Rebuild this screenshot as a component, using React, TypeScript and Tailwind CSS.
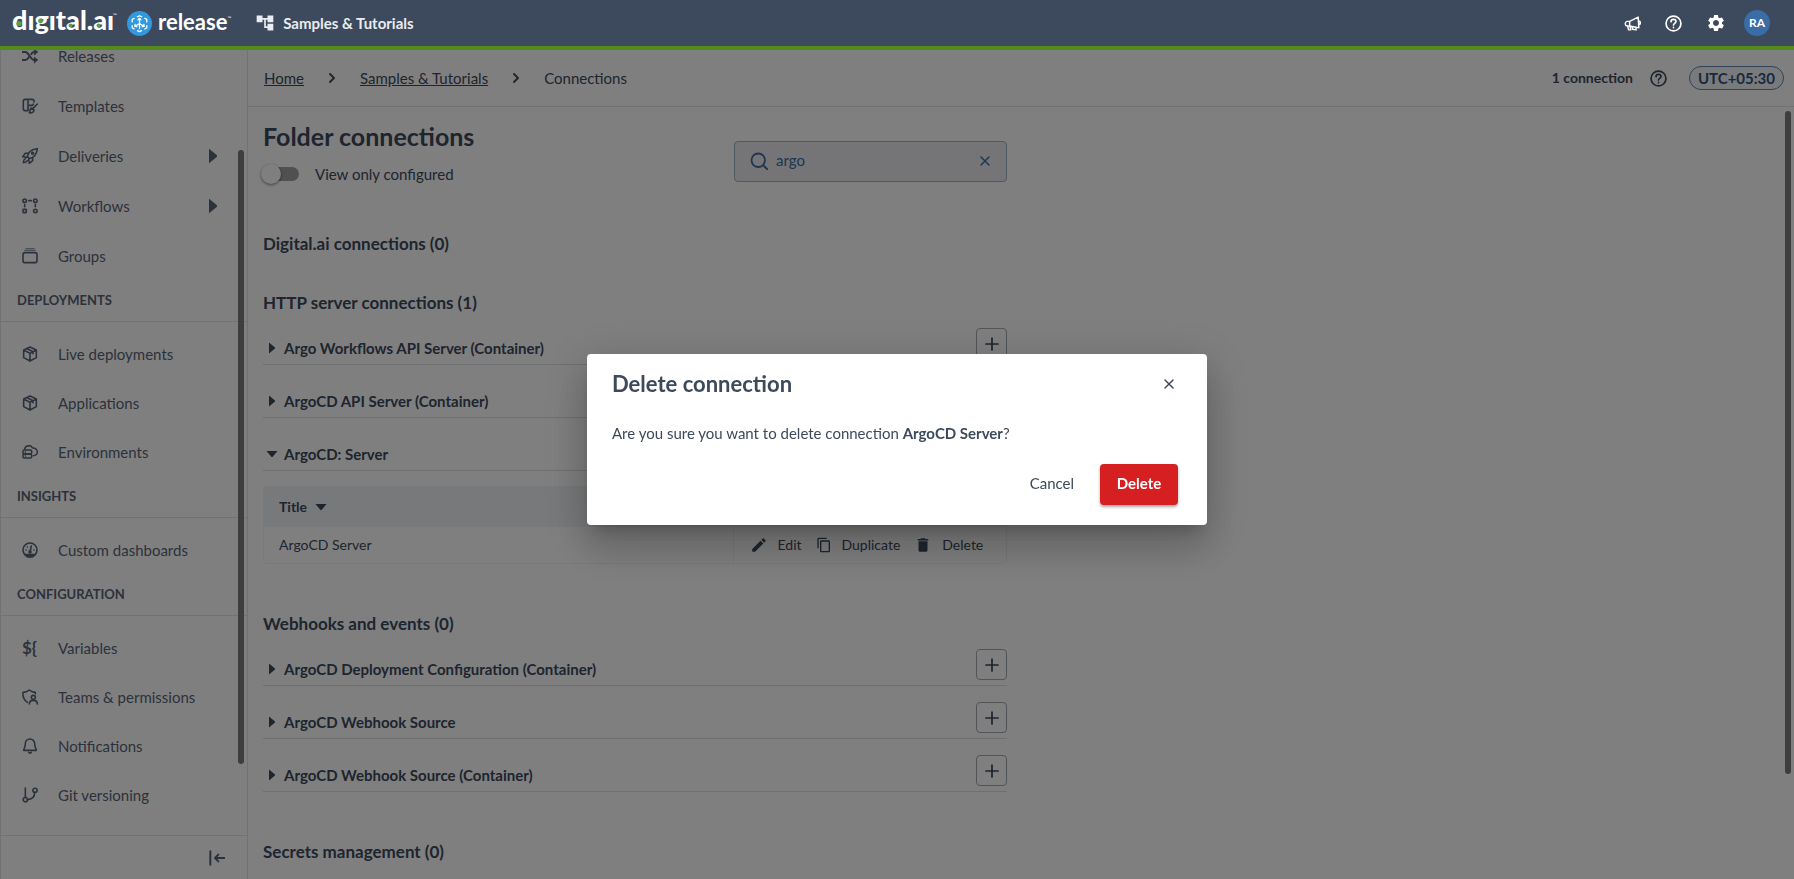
import { useState } from 'react';
import type { ReactNode } from 'react';
import { MdAccountTree, MdContentCopy, MdDelete, MdEdit, MdSettings } from 'react-icons/md';

type IconProps = { className?: string };

function StrokeIcon({ className = 'w-4 h-4', width = 2, children }: IconProps & { width?: number; children: ReactNode }) {
  return (
    <svg className={className} viewBox="0 0 24 24" fill="none" stroke="currentColor" strokeWidth={width} strokeLinecap="round" strokeLinejoin="round" aria-hidden="true">
      {children}
    </svg>
  );
}

const ShuffleIcon = () => (
  <StrokeIcon width={3}>
    <path d="M1 6h4c5 0 8 12 13 12h4M1 18h4c2 0 4-2 5-4M14 9c1-2 3-3 4-3h4" />
    <path d="m19 2 4 4-4 4zM19 14l4 4-4 4z" fill="currentColor" strokeWidth={1.5} />
  </StrokeIcon>
);

const TemplateIcon = () => (
  <StrokeIcon width={2.4}>
    <path d="M9 19H5a3 3 0 0 1-3-3V5a3 3 0 0 1 3-3h10a3 3 0 0 1 3 3v1M9 2v17M9 11h6a2 2 0 0 0 2-2" />
    <path d="m23 9-8 8M15 15c-2 0-3 2-3 4s-1 3-1 3c4 1 7-1 7-4z" />
  </StrokeIcon>
);

const RocketIcon = () => (
  <StrokeIcon width={2.3}>
    <path d="M8 13c1-6 6-11 15-12-1 9-6 14-12 15z" />
    <path d="M9 8H5l-4 5 6 1M16 15v4l-5 4-1-6M5 16c-2 1-3 3-3 6 3 0 5-1 6-3" />
    <circle cx="16" cy="8" r="1.5" />
  </StrokeIcon>
);

const WorkflowIcon = () => (
  <StrokeIcon width={2.4}>
    <circle cx="4" cy="4" r="2.6" />
    <circle cx="20" cy="4" r="2.6" />
    <rect x="1.5" y="17" width="5" height="5" rx="1" />
    <circle cx="20" cy="19.5" r="2.6" />
    <path d="M10 4h4M4 10v3M20 10v3" />
  </StrokeIcon>
);

const GroupIcon = () => (
  <StrokeIcon width={2.4}>
    <rect x="1.5" y="7" width="21" height="15" rx="3" />
    <path d="M4 3.5h16M6 .8h12" strokeWidth={2} opacity=".6" />
  </StrokeIcon>
);

const BoxIcon = () => (
  <StrokeIcon width={2.4}>
    <path d="m12 1.5 9.5 4.5v11.5L12 22.5l-9.5-5V6zM2.5 6 12 11l9.5-5M12 11v11.5M7 3.8l9.5 4.8v3" />
  </StrokeIcon>
);

const CloudServerIcon = () => (
  <StrokeIcon width={2.3}>
    <path d="M4 7a6.5 6.5 0 0 1 12-1c4-.5 7 2.5 7 6s-3 5.5-6 5.5" />
    <rect x="1.5" y="9" width="13" height="6" rx="2" />
    <rect x="1.5" y="15" width="13" height="6" rx="2" />
    <path d="M5 12h.1M5 18h.1" />
  </StrokeIcon>
);

const GaugeIcon = () => (
  <StrokeIcon width={2.4}>
    <circle cx="12" cy="12" r="10.5" />
    <path d="M5 19h14l-3 3H8z" fill="currentColor" />
    <path d="m12 15 2-9M6 12h.1M8 7.5h.1M18 12h.1" />
    <circle cx="12" cy="15" r="1.5" />
  </StrokeIcon>
);

const ShieldUserIcon = () => (
  <StrokeIcon width={2.4}>
    <path d="M8 20c-5-3-7-7-6.5-15C5 5 8 4 11 1.5 14 4 16 5 20 5v2" />
    <circle cx="17" cy="12.5" r="3" />
    <path d="M11 22.5c0-4 2.5-5.5 6-5.5s6 1.5 6 5.5" />
  </StrokeIcon>
);

const BellIcon = () => (
  <StrokeIcon width={2.4}>
    <path d="M12 1.5a7 7 0 0 0-7 7c0 6-2.5 8-2.5 10h19c0-2-2.5-4-2.5-10a7 7 0 0 0-7-7z" />
    <path d="M10 21.5c.5 1.5 3.5 1.5 4 0" />
  </StrokeIcon>
);

const BranchIcon = () => (
  <StrokeIcon width={2.4}>
    <path d="M5 1.5v14M8 19c6 0 11-3 11-11" />
    <circle cx="5" cy="19" r="3.2" />
    <circle cx="19.5" cy="5" r="3.2" />
  </StrokeIcon>
);

const VariableIcon = () => <span className="text-[17px] leading-4 font-bold">{'${'}</span>;

const HelpIcon = ({ className }: IconProps) => (
  <StrokeIcon className={className} width={2.4}>
    <circle cx="12" cy="12" r="10.5" />
    <path d="M8.5 9.5c0-2 1.5-3.3 3.5-3.3s3.5 1.3 3.5 3.1c0 2.2-3.5 2.7-3.5 4.7M12 17.5v.2" />
  </StrokeIcon>
);

const MegaphoneIcon = ({ className }: IconProps) => (
  <StrokeIcon className={className} width={2.1}>
    <path d="m8 9 12-6 1 15-13-2.5H4.5a3.3 3.3 0 0 1 0-6.5zM8 9v6.5M5 15.5 6.500 21h3L8.500 16M12 17v3l5 1v-3.500M20.500 8.500a2.500 2.500 0 0 1 .3 5" />
  </StrokeIcon>
);

const CloseIcon = ({ className }: IconProps) => (
  <StrokeIcon className={className} width={3}>
    <path d="m4 4 16 16M20 4 4 20" />
  </StrokeIcon>
);

const ChevronIcon = () => (
  <StrokeIcon className="w-4 h-4" width={2.8}>
    <path d="m9 6 6 6-6 6" />
  </StrokeIcon>
);

const Triangle = ({ down, className = 'w-3 h-3' }: IconProps & { down?: boolean }) => (
  <svg className={className} viewBox="0 0 12 12" fill="currentColor" aria-hidden="true">
    {down ? <path d="M.5 3h11l-5 6h-1z" /> : <path d="M3 .5v11l6-5v-1z" />}
  </svg>
);

const DigitalLogo = () => (
  <svg className="w-[106px] h-10" viewBox="0 0 106 40" role="img" aria-label="digital.ai">
    <text x="0" y="27" fontFamily="Lato, sans-serif" fontWeight="900" fontSize="27" fill="#fff">
      dıgıtal.aı
    </text>
    <text x="101" y="14" fontFamily="Lato, sans-serif" fontSize="5" fill="#fff">™</text>
    <g fill="#5f9e3f">
      <circle cx="7" cy="20.5" r="2.6" />
      <circle cx="28.5" cy="18" r="2.4" />
      <circle cx="58.5" cy="22.5" r="2" />
      <circle cx="86.5" cy="22.5" r="2" />
    </g>
  </svg>
);

const ReleaseMark = () => (
  <svg className="w-[25px] h-[25px]" viewBox="0 0 24 24" aria-hidden="true">
    <circle cx="12" cy="12" r="12" fill="#3399de" />
    <g fill="none" stroke="#fff" strokeWidth="1.2" strokeLinecap="round" strokeLinejoin="round">
      <path d="M10 5.5 12 4.5l2 1M17 7l2 1v2.5M19 14v2l-2 1.2M14 18.8l-2 1-2-1M7 17.2 5 16v-2M5 10.5V8l2-1" />
      <path d="M12 12V7M12 12l-4.5 2.8M12 12l4.5 2.8M10.5 8.5 12 7l1.5 1.5M7.8 12.8l-.3 2 2 .2M16.2 12.8l.3 2-2 .2M12 12v5" />
    </g>
  </svg>
);

type NavItem = { label: string; icon: () => ReactNode; expandable?: boolean };

const releaseItems: NavItem[] = [
  { label: 'Releases', icon: ShuffleIcon },
  { label: 'Templates', icon: TemplateIcon },
  { label: 'Deliveries', icon: RocketIcon, expandable: true },
  { label: 'Workflows', icon: WorkflowIcon, expandable: true },
  { label: 'Groups', icon: GroupIcon },
];

const navSections: { title: string; items: NavItem[] }[] = [
  {
    title: 'DEPLOYMENTS',
    items: [
      { label: 'Live deployments', icon: BoxIcon },
      { label: 'Applications', icon: BoxIcon },
      { label: 'Environments', icon: CloudServerIcon },
    ],
  },
  { title: 'INSIGHTS', items: [{ label: 'Custom dashboards', icon: GaugeIcon }] },
  {
    title: 'CONFIGURATION',
    items: [
      { label: 'Variables', icon: VariableIcon },
      { label: 'Teams & permissions', icon: ShieldUserIcon },
      { label: 'Notifications', icon: BellIcon },
      { label: 'Git versioning', icon: BranchIcon },
    ],
  },
];

function NavLink({ item }: { item: NavItem }) {
  const Icon = item.icon;
  return (
    <li>
      <a href="#" className="flex items-center h-[49px] pb-px pl-[21px] pr-[26px]">
        <span className="w-9 flex">
          <Icon />
        </span>
        <span className="flex-1 leading-4">{item.label}</span>
        {item.expandable && <Triangle className="w-4 h-4" />}
      </a>
    </li>
  );
}

function Sidebar() {
  return (
    <aside className="relative w-[248px] shrink-0 flex flex-col border-x border-[#e3e5e8] text-[15px] text-[#596577]">
      {/* The list rests a little way down its scroll range */}
      <nav className="flex-1 min-h-0 overflow-hidden">
        <ul className="flex flex-col gap-px -mt-[18px]">
          {releaseItems.map((item) => <NavLink key={item.label} item={item} />)}
        </ul>
        {navSections.map((section) => (
          <section key={section.title}>
            <h2 className="h-[41px] flex items-center px-4 border-b border-[#e3e5e8] text-[13px] font-bold">{section.title}</h2>
            <ul className="pt-2">
              {section.items.map((item) => <NavLink key={item.label} item={item} />)}
            </ul>
          </section>
        ))}
      </nav>
      <div className="h-11 border-t border-[#e3e5e8] flex items-center justify-end pr-[22px]">
        <button type="button" aria-label="Collapse menu">
          <StrokeIcon width={3}>
            <path d="M2 2v20M9 12h14M14 7l-5 5 5 5" />
          </StrokeIcon>
        </button>
      </div>
      <div className="absolute right-[3px] top-[100px] bottom-[115px] w-1.5 rounded-full bg-[#7c7c7c]" />
    </aside>
  );
}

function Header() {
  return (
    <header className="relative z-20 h-[50px] shrink-0 flex items-center bg-[#3d495c] border-b-4 border-[#528a1c] pl-3 pr-6 text-white">
      <a href="#" className="flex items-center">
        <DigitalLogo />
        <span className="ml-[9px] flex items-center gap-1">
          <ReleaseMark />
          <span className="ml-0.5 text-[22px] leading-6 font-bold pb-0.5">release</span>
          <span className="-ml-1 text-[5px] leading-4 self-start">™</span>
        </span>
      </a>
      <a href="#" className="ml-6 flex items-center gap-2 text-[15px] font-bold text-[#e9ecf0]">
        <MdAccountTree className="w-5 h-5" />
        Samples &amp; Tutorials
      </a>
      <div className="ml-auto flex items-center gap-6">
        <button type="button" aria-label="Announcements"><MegaphoneIcon className="w-[17px] h-[17px]" /></button>
        <button type="button" aria-label="Help"><HelpIcon className="w-[17px] h-[17px]" /></button>
        <button type="button" aria-label="Settings"><MdSettings className="w-5 h-5" /></button>
        <button type="button" className="-ml-1.5 w-[26px] h-[26px] rounded-full bg-[#3a6ca5] text-xs font-bold">RA</button>
      </div>
    </header>
  );
}

function Breadcrumbs() {
  return (
    <div className="h-[57px] shrink-0 flex items-center border-b border-[#e3e5e8] pl-4 pr-2.5 text-[15px] text-[#3d4a5c]">
      <nav aria-label="Breadcrumb" className="flex items-center gap-5">
        <a href="#" className="underline">Home</a>
        <ChevronIcon />
        <a href="#" className="underline">Samples &amp; Tutorials</a>
        <ChevronIcon />
        <span>Connections</span>
      </nav>
      <div className="ml-auto flex items-center">
        <span className="text-sm font-bold">1 connection</span>
        <button type="button" aria-label="Help" className="ml-[17px]"><HelpIcon className="w-[17px] h-[17px]" /></button>
        <span className="ml-[22px] h-6 px-2 flex items-center rounded-full border border-[#5f86b5] bg-[#f3f5f9] font-bold text-[#31517c]">UTC+05:30</span>
      </div>
    </div>
  );
}

function ConnectionRow({ title, open }: { title: string; open?: boolean }) {
  return (
    <div className="h-[53px] flex items-end justify-between border-b border-[#dddfe2]">
      <button type="button" aria-expanded={!!open} className="flex items-center gap-1.5 pl-[3px] pb-1.5 text-[15px] leading-5 font-bold">
        <Triangle down={open} />
        {title}
      </button>
      <button type="button" aria-label={`Add ${title}`} className="mb-[5px] w-[31px] h-[31px] flex items-center justify-center rounded border border-[#a3a9b2]">
        <StrokeIcon width={2.6}>
          <path d="M12 3v18M3 12h18" />
        </StrokeIcon>
      </button>
    </div>
  );
}

function ConnectionTable() {
  return (
    <div className="mt-[15px] rounded border border-[#f0f2f4]">
      <table className="w-full table-fixed text-sm text-left">
        <thead>
          <tr className="h-10 bg-[#f0f3f7]">
            <th className="pl-[15px] font-bold">
              <button type="button" className="flex items-center gap-2">Title <Triangle down /></button>
            </th>
            <th className="w-[273px]" aria-label="Actions" />
          </tr>
        </thead>
        <tbody>
          <tr className="h-9">
            <td className="pl-[15px]">ArgoCD Server</td>
            <td className="border-l border-[#f0f2f4] pl-4">
              <div className="flex items-center gap-3.5">
                <button type="button" className="flex items-center gap-2.5"><MdEdit className="w-[18px] h-[18px]" />Edit</button>
                <button type="button" className="flex items-center gap-2.5"><MdContentCopy className="w-4 h-4" />Duplicate</button>
                <button type="button" className="flex items-center gap-2.5"><MdDelete className="w-[18px] h-[18px]" />Delete</button>
              </div>
            </td>
          </tr>
        </tbody>
      </table>
    </div>
  );
}

const SectionTitle = ({ children }: { children: ReactNode }) => <h2 className="text-[17px] leading-6 font-bold">{children}</h2>;

function Connections() {
  const [search, setSearch] = useState('argo');
  return (
    <div className="relative flex-1 min-h-0 overflow-hidden">
      <div className="max-w-[759px] pl-[15px] text-[#3d4a5c]">
        <div className="flex justify-between pt-[13px]">
          <div>
            <h1 className="text-[25px] leading-8 font-bold">Folder connections</h1>
            <label className="mt-2.5 flex items-center gap-4 text-[15px] leading-6">
              <span className="relative w-9 h-3.5 rounded-full bg-[#a0a0a0]">
                <input type="checkbox" className="peer sr-only" />
                <span className="absolute -left-0.5 -top-[3px] w-5 h-5 rounded-full bg-white shadow-[0_1px_3px_rgba(0,0,0,0.5)] peer-checked:left-4" />
              </span>
              View only configured
            </label>
          </div>
          <div className="mt-[21px] h-[41px] w-[273px] flex items-center gap-2 pb-0.5 px-[15px] rounded border border-[#a3b0c6] bg-[#eaebf1] text-[15px] text-[#3d6c9e]">
            <StrokeIcon className="w-[18px] h-[18px]" width={2.4}>
              <circle cx="11" cy="11" r="9" />
              <path d="m18 18 5 5" />
            </StrokeIcon>
            <input type="text" aria-label="Search connections" value={search} onChange={(e) => setSearch(e.target.value)} className="flex-1 min-w-0 outline-none bg-transparent" />
            <button type="button" aria-label="Clear search" onClick={() => setSearch('')}><CloseIcon className="w-3 h-3" /></button>
          </div>
        </div>

        <div className="mt-[46px]">
          <SectionTitle>Digital.ai connections (0)</SectionTitle>
        </div>
        <section className="mt-[35px]">
          <SectionTitle>HTTP server connections (1)</SectionTitle>
          <div className="-mt-[3px]">
            <ConnectionRow title="Argo Workflows API Server (Container)" />
            <ConnectionRow title="ArgoCD API Server (Container)" />
            <ConnectionRow title="ArgoCD: Server" open />
          </div>
          <ConnectionTable />
        </section>
        <section className="mt-12">
          <SectionTitle>Webhooks and events (0)</SectionTitle>
          <div className="-mt-[3px]">
            <ConnectionRow title="ArgoCD Deployment Configuration (Container)" />
            <ConnectionRow title="ArgoCD Webhook Source" />
            <ConnectionRow title="ArgoCD Webhook Source (Container)" />
          </div>
        </section>
        <div className="mt-12">
          <SectionTitle>Secrets management (0)</SectionTitle>
        </div>
      </div>
      <div className="absolute right-[3px] top-1 bottom-[105px] w-1.5 rounded-full bg-[#7c7c7c]" />
    </div>
  );
}

function DeleteDialog() {
  return (
    <div className="fixed inset-0 z-10 flex items-center justify-center bg-black/50">
      <div
        role="dialog"
        aria-modal="true"
        aria-labelledby="dialog-title"
        className="w-full max-w-[620px] rounded bg-white pl-[25px] pr-[29px] pt-4 pb-5 text-[#3d4a5c] shadow-[0_11px_15px_-7px_rgba(0,0,0,0.2),0_24px_38px_3px_rgba(0,0,0,0.14),0_9px_46px_8px_rgba(0,0,0,0.12)]"
      >
        <div className="flex items-center justify-between pr-[3px]">
          <h2 id="dialog-title" className="text-[22px] leading-7 font-bold">Delete connection</h2>
          <button type="button" aria-label="Close"><CloseIcon className="w-3 h-3" /></button>
        </div>
        <p className="mt-[23px] text-[15px] leading-6">
          Are you sure you want to delete connection <strong>ArgoCD Server</strong>?
        </p>
        <div className="mt-[19px] flex justify-end gap-2.5 text-[15px]">
          <button type="button" className="h-[41px] px-4 pb-0.5">Cancel</button>
          <button type="button" className="h-[41px] w-[78px] pb-0.5 rounded bg-[#d61f21] font-bold text-white shadow-[0_2px_3px_rgba(0,0,0,0.35)]">Delete</button>
        </div>
      </div>
    </div>
  );
}

export default function App() {
  return (
    <div className="h-screen flex flex-col overflow-hidden bg-white font-['Lato',sans-serif]">
      <Header />
      <div className="flex-1 min-h-0 flex">
        <Sidebar />
        <main className="flex-1 min-w-0 flex flex-col">
          <Breadcrumbs />
          <Connections />
        </main>
      </div>
      <DeleteDialog />
    </div>
  );
}
